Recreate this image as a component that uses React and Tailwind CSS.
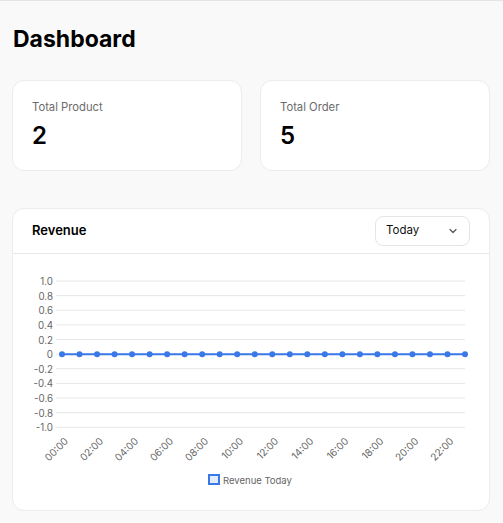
import React from "react";

const font = { fontFamily: "Inter, 'Noto Sans', sans-serif" };
const chartFont = "Inter, 'Liberation Sans', sans-serif";

function Chart() {
  const yTicks = [1.0, 0.8, 0.6, 0.4, 0.2, 0, -0.2, -0.4, -0.6, -0.8, -1.0];
  const top = 27;
  const step = 14.63;
  const x0 = 49;
  const x1 = 452;
  const n = 24;
  const dx = (x1 - x0) / (n - 1);
  const zeroY = top + 5 * step;
  const pts = Array.from({ length: n }, (_, i) => x0 + i * dx);
  return (
    <svg width="476" height="256" className="block" fontFamily={chartFont}>
      {yTicks.map((t, i) => {
        const y = top + i * step;
        const label = t === 0 ? "0" : t.toFixed(1);
        return (
          <g key={i}>
            <line x1="43" x2={x1} y1={y} y2={y} stroke="#e6e6e6" strokeWidth="1" />
            <text x="40" y={y + 0.5} textAnchor="end" dominantBaseline="central" fontSize="9.75" fill="#666">
              {label}
            </text>
          </g>
        );
      })}
      <line x1={x0} x2={x1} y1={zeroY} y2={zeroY} stroke="#3b78e7" strokeWidth="2" />
      {pts.map((x, i) => (
        <circle key={i} cx={x} cy={zeroY} r="3" fill="#3b78e7" />
      ))}
      {pts.map((x, i) =>
        i % 2 === 0 ? (
          <text
            key={"l" + i}
            transform={`translate(${x + 4} ${185}) rotate(-45)`}
            textAnchor="end"
            dominantBaseline="central"
            fontSize="10"
            fill="#666"
          >
            {String(i).padStart(2, "0") + ":00"}
          </text>
        ) : null
      )}
      <rect x="196" y="221" width="10" height="9" fill="rgba(59,120,231,0.15)" stroke="#3b78e7" strokeWidth="2" />
      <text x="210" y="226" dominantBaseline="central" fontSize="9.5" fill="#666">
        Revenue Today
      </text>
    </svg>
  );
}

export default function App() {
  return (
    <div className="min-h-[523px] w-full bg-[#f9f9f9] border-t border-[#e5e5e5]" style={font}>
      <div className="pl-3 pr-[13px] pt-[22px] pb-3">
        <h1 className="text-[23px] font-bold text-black leading-8 ml-px">Dashboard</h1>
        <div className="grid grid-cols-2 gap-[18px] mt-[25px]">
          <div className="bg-white border border-[#ececec] rounded-xl h-[91px] pl-[19px] pr-5 pt-[18px]">
            <div className="text-[11.25px] text-[#6b6b6b] leading-4">Total Product</div>
            <div className="text-2xl font-semibold text-black mt-[5px] leading-8">2</div>
          </div>
          <div className="bg-white border border-[#ececec] rounded-xl h-[91px] pl-[19px] pr-5 pt-[18px]">
            <div className="text-[11.25px] text-[#6b6b6b] leading-4">Total Order</div>
            <div className="text-2xl font-semibold text-black mt-[5px] leading-8">5</div>
          </div>
        </div>
        <div className="mt-[37px] bg-white border border-[#ececec] rounded-xl">
          <div className="h-[45px] flex items-center justify-between pl-[19px] pr-[19px] border-b border-[#e8e8e8]">
            <div className="text-[13px] font-semibold text-black">Revenue</div>
            <div className="w-[95px] h-[30px] border border-[#e5e5e5] rounded-lg flex items-center justify-between pl-[10px] pr-[11px]">
              <span className="text-[11.5px] text-[#111]">Today</span>
              <svg width="10" height="10" viewBox="0 0 10 10">
                <path d="M2 3.5 L5 6.5 L8 3.5" fill="none" stroke="#555" strokeWidth="1.2" strokeLinecap="round" strokeLinejoin="round" />
              </svg>
            </div>
          </div>
          <Chart />
        </div>
      </div>
    </div>
  );
}
